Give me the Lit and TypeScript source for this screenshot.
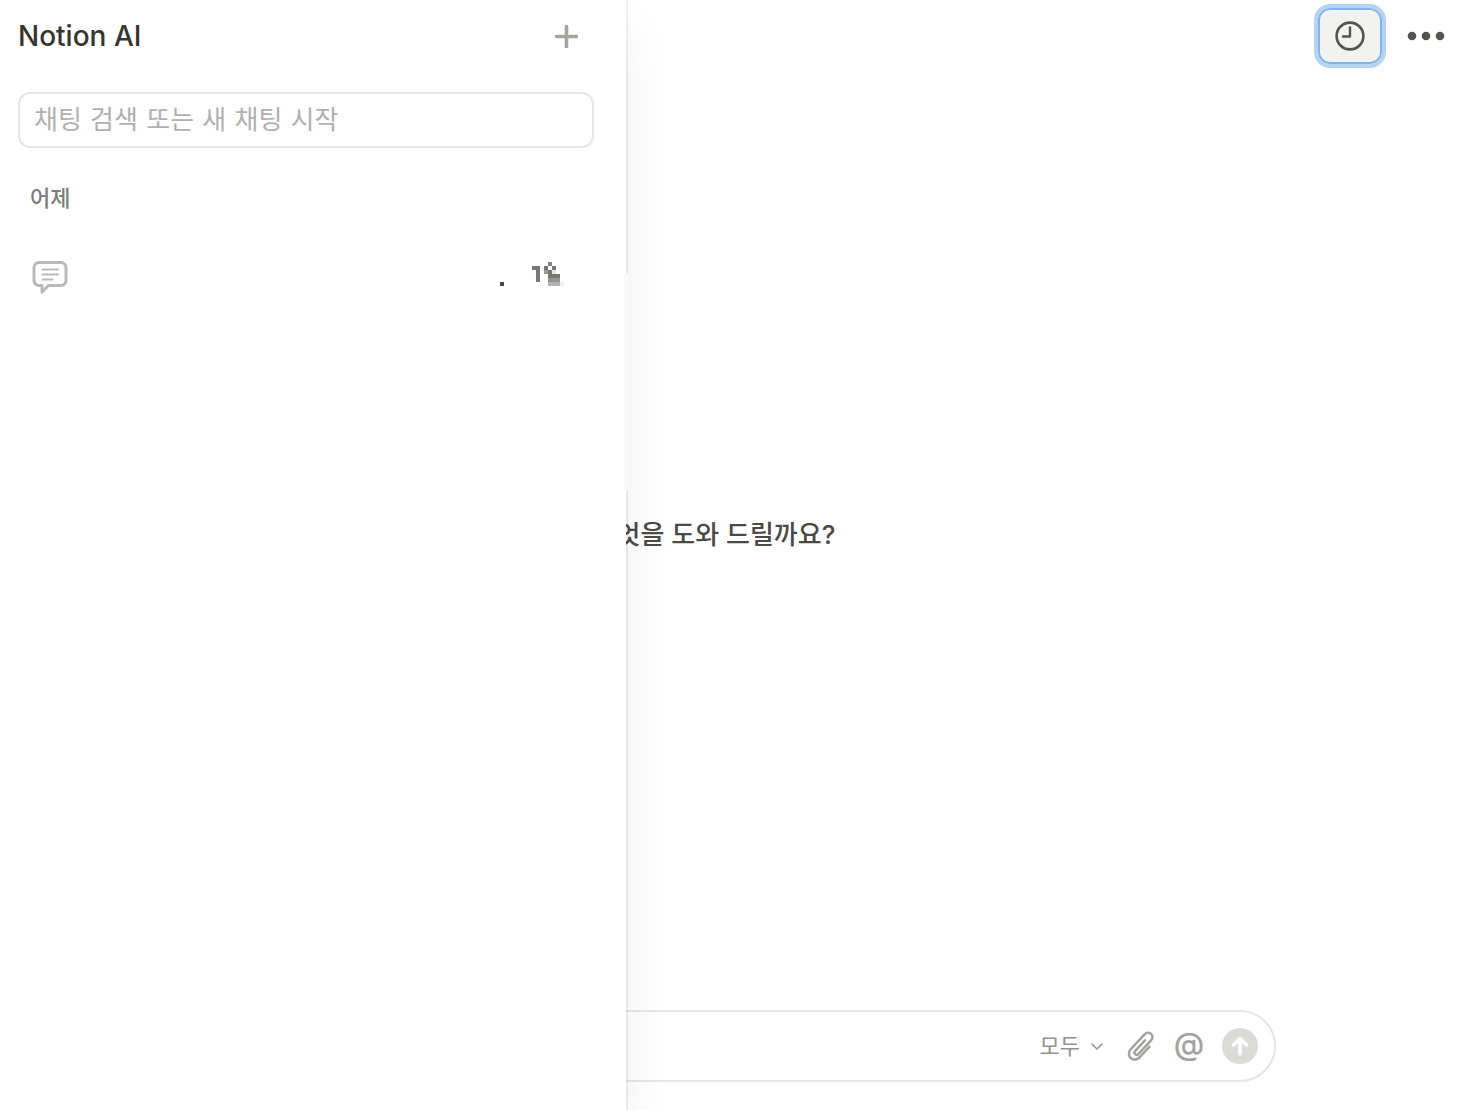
import { LitElement, html, css, svg } from "lit";
import { customElement, state } from "lit/decorators.js";

const shared = css`
  * {
    box-sizing: border-box;
  }
  button {
    display: flex;
    align-items: center;
    justify-content: center;
    margin: 0;
    padding: 0;
    border: 0;
    background: none;
    font: inherit;
    color: inherit;
    cursor: pointer;
  }
  svg {
    display: block;
    fill: none;
    stroke: currentColor;
    stroke-linecap: round;
    stroke-linejoin: round;
  }
`;

/** Title cells of a chat shown pixelated; each entry is [column, row, shade, span]. */
const TITLE_CELLS: [number, number, string, number?][] = [
  [0, 5, "#494846"],
  [8, 1, "#787774", 2],
  [9, 2, "#787774"],
  [9, 3, "#787774"],
  [9, 4, "#787774"],
  [12, 0, "#858481"],
  [11, 1, "#787774"],
  [13, 1, "#787774"],
  [11, 2, "#989795"],
  [12, 2, "#787774"],
  [13, 2, "#e6e6e6"],
  [12, 3, "#787774", 3],
  [12, 4, "#939391", 3],
  [12, 5, "#b1b1b0", 3],
  [15, 5, "#eeeeee"],
];

@customElement("chat-history")
export class ChatHistory extends LitElement {
  @state() private query = "";

  static styles = [
    shared,
    css`
      :host {
        display: flex;
        flex-direction: column;
        background: #fff;
      }
      .head {
        display: flex;
        align-items: center;
        justify-content: space-between;
        height: 72px;
        padding: 0 40px 0 18px;
      }
      h1 {
        margin: 0;
        font-size: 28px;
        line-height: 36px;
        font-weight: 500;
        color: #37352f;
      }
      .add {
        width: 40px;
        height: 40px;
        color: #a5a4a1;
      }
      .search {
        padding: 20px 32px 0 18px;
      }
      .search input {
        display: block;
        width: 100%;
        height: 56px;
        padding: 0 14px;
        border: 2px solid #e6e6e5;
        border-radius: 12px;
        outline: 0;
        background: #fff;
        font-family: "DejaVu Sans", "Noto Sans CJK KR", sans-serif;
        font-size: 26px;
        color: #37352f;
      }
      .search input::placeholder {
        color: #b0b0ae;
        opacity: 1;
      }
      h2 {
        margin: 0;
        padding: 32px 30px 0;
        font-size: 22px;
        line-height: 36px;
        font-weight: 500;
        color: #7d7c78;
      }
      ul {
        margin: 0;
        padding: 32px 18px 0;
        list-style: none;
      }
      .chat {
        width: 100%;
        height: 56px;
        padding: 0 44px 0 12px;
        justify-content: space-between;
        color: #b9b9b7;
      }
      .cells {
        margin-bottom: 4px;
        stroke: none;
      }
    `,
  ];

  render() {
    return html`
      <div class="head">
        <h1>Notion AI</h1>
        <button class="add" aria-label="새 채팅">
          <svg width="24" height="24" viewBox="0 0 24 24" stroke-width="3.600">
            <path d="M12.500 2.500v20M2.500 12.500h20" />
          </svg>
        </button>
      </div>
      <div class="search">
        <input
          type="text"
          aria-label="채팅 검색"
          placeholder="채팅 검색 또는 새 채팅 시작"
          .value=${this.query}
          @input=${(e: Event) => (this.query = (e.target as HTMLInputElement).value)}
        />
      </div>
      <h2>어제</h2>
      <ul>
        <li>
          <button class="chat" aria-label="채팅">
            <svg width="40" height="40" viewBox="0 -1 40 40" stroke-width="3">
              <path
                d="M9 5.500h22a5 5 0 0 1 5 5v13a5 5 0 0 1-5 5H18.500l-6.500 6.500v-6.500H9a5 5 0 0 1-5-5v-13a5 5 0 0 1 5-5z"
              />
              <path stroke-width="2" d="M12.500 12.500h15.500M12.500 17.500h15.500M12.500 22.500h10" />
            </svg>
            <svg class="cells" width="64" height="24" viewBox="0 0 16 6" shape-rendering="crispEdges">
              ${TITLE_CELLS.map(
                ([x, y, fill, w = 1]) => svg`<rect x=${x} y=${y} width=${w} height="1" fill=${fill} />`
              )}
            </svg>
          </button>
        </li>
      </ul>
    `;
  }
}

@customElement("chat-composer")
export class ChatComposer extends LitElement {
  static styles = [
    shared,
    css`
      :host {
        display: flex;
        align-items: center;
        height: 72px;
        padding: 0 16px 0 32px;
        border: 2px solid #e6e6e5;
        border-radius: 36px;
        box-sizing: border-box;
        background: #fff;
        color: #a3a29f;
      }
      .prompt {
        flex: 1;
        min-width: 0;
        border: 0;
        outline: 0;
        background: none;
        font: inherit;
        font-size: 26px;
        color: #37352f;
      }
      .scope {
        gap: 10px;
        margin-right: 22px;
        font-size: 22px;
        line-height: 32px;
        color: #91918e;
      }
      .tools {
        display: flex;
        align-items: center;
        gap: 18px;
      }
      .icon {
        width: 30px;
        height: 36px;
      }
      .at {
        font-size: 31px;
        line-height: 32px;
        font-weight: 500;
        padding-bottom: 4px;
      }
      .send {
        width: 36px;
        height: 36px;
        border-radius: 50%;
        background: #dadad9;
        color: #fff;
      }
    `,
  ];

  render() {
    return html`
      <input class="prompt" type="text" aria-label="메시지" />
      <button class="scope">
        모두
        <svg width="14" height="10" viewBox="0 0 14 10" stroke-width="1.600">
          <path d="M2 3l5 5 5-5" />
        </svg>
      </button>
      <div class="tools">
        <button class="icon" aria-label="파일 첨부">
          <svg width="30" height="32" viewBox="0 0 30 32" stroke-width="2.500">
            <path
              transform="translate(15 17) rotate(43)"
              d="M-1.600-7.500V7a2.200 2.200 0 0 0 4.400 0V-12a4.400 4.400 0 0 0-8.800 0V9a6 6 0 0 0 12 0V-6"
            />
          </svg>
        </button>
        <button class="icon at" aria-label="멘션">@</button>
        <button class="send" aria-label="보내기">
          <svg width="20" height="22" viewBox="0 0 20 22" stroke-width="3.600">
            <path d="M10 19V4M3.500 10L10 3.500 16.500 10" />
          </svg>
        </button>
      </div>
    `;
  }
}

@customElement("app-root")
export class AppRoot extends LitElement {
  static styles = [
    shared,
    css`
      :host {
        display: block;
        position: relative;
        min-height: 100vh;
        overflow: hidden;
        background: #fff;
        font-family: Inter, "Noto Sans CJK KR", sans-serif;
      }
      .page {
        display: flex;
        flex-direction: column;
        min-height: 100vh;
      }
      .bar {
        display: flex;
        align-items: center;
        justify-content: flex-end;
        gap: 20px;
        height: 72px;
        padding-right: 10px;
        color: #55534e;
      }
      .history {
        width: 64px;
        height: 56px;
        border: 2px solid #83b3ec;
        border-radius: 12px;
        outline: 4px solid #b5d3f4;
        background: #f2f2f1;
      }
      .more {
        width: 48px;
        height: 56px;
      }
      .more svg {
        fill: currentColor;
        stroke: none;
      }
      main {
        flex: 1;
        display: flex;
        align-items: center;
        justify-content: center;
        padding: 0 32px 12px 0;
      }
      .greeting {
        margin: 0;
        font-size: 26px;
        line-height: 36px;
        font-weight: 500;
        color: #4b4a46;
      }
      footer {
        padding: 0 184px 28px;
      }
      chat-history {
        position: absolute;
        top: 0;
        bottom: 0;
        left: 0;
        width: 626px;
        box-shadow: 0 0 0 2px rgba(15, 15, 15, 0.06), 0 28px 48px rgba(15, 15, 15, 0.07);
      }
      .haze {
        position: absolute;
        top: 274px;
        left: 624px;
        width: 4px;
        height: 216px;
        background: #fafafa;
      }
    `,
  ];

  render() {
    return html`
      <div class="page">
        <header class="bar">
          <button class="history" aria-label="채팅 기록" aria-expanded="true">
            <svg width="32" height="32" viewBox="0 0 32 32" stroke-width="2.600">
              <circle cx="16" cy="16" r="13.400" />
              <path stroke-width="2.400" d="M16 7.500V16.500H9" />
            </svg>
          </button>
          <button class="more" aria-label="더 보기">
            <svg width="38" height="10" viewBox="0 0 38 10">
              <circle cx="5" cy="5" r="4.300" />
              <circle cx="19" cy="5" r="4.300" />
              <circle cx="33" cy="5" r="4.300" />
            </svg>
          </button>
        </header>
        <main>
          <p class="greeting">무엇을 도와 드릴까요?</p>
        </main>
        <footer>
          <chat-composer></chat-composer>
        </footer>
      </div>
      <chat-history></chat-history>
      <div class="haze"></div>
    `;
  }
}
